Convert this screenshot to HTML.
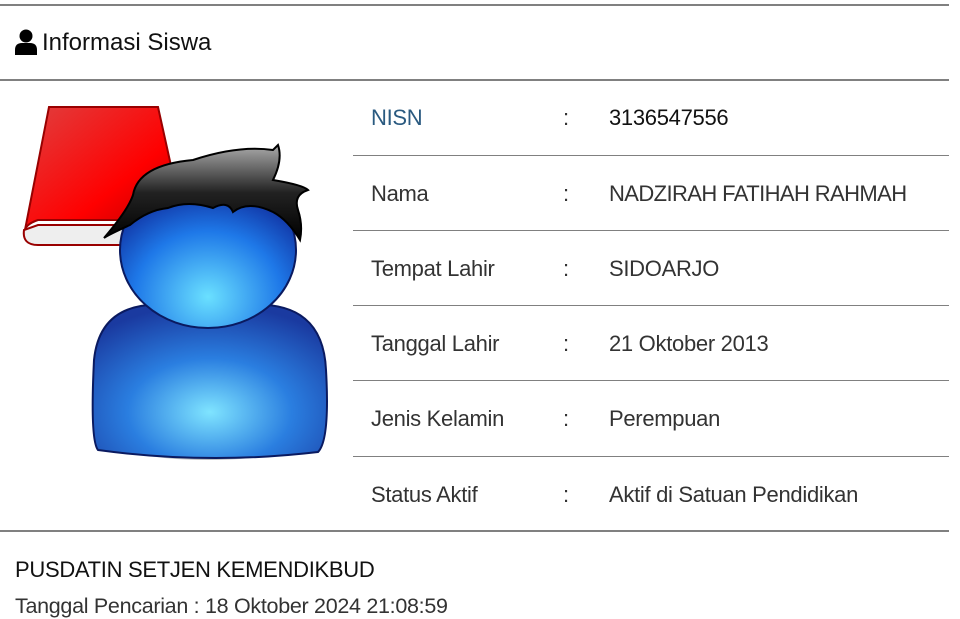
<!DOCTYPE html>
<html><head><meta charset="utf-8"><style>
body{margin:0;width:960px;height:613px;overflow:hidden;background:#fff;font-family:"Liberation Sans",sans-serif;color:#333;}
.hl{position:absolute;height:2px;background:#808080;}
.t{position:absolute;font-size:22px;white-space:nowrap;letter-spacing:-0.3px;}
</style></head><body>
<div class="hl" style="left:0;top:4px;width:949px"></div>
<div class="hl" style="left:0;top:79px;width:949px"></div>
<svg style="position:absolute;left:14px;top:29px" width="24" height="26" viewBox="0 0 24 26"><circle cx="12" cy="7" r="6.5" fill="#000"/><path d="M1 26 V21 Q1 14 8 14 H16 Q23 14 23 21 V26 Z" fill="#000"/></svg>
<div class="t" style="left:42px;top:29px;color:#111;font-size:24px;letter-spacing:0">Informasi Siswa</div>

<svg style="position:absolute;left:18px;top:100px" width="315" height="365" viewBox="0 0 315 365">
<defs>
<linearGradient id="r" x1="0" y1="0" x2="1" y2="1"><stop offset="0" stop-color="#e04040"/><stop offset=".6" stop-color="#ff0000"/><stop offset="1" stop-color="#b00000"/></linearGradient>
<radialGradient id="b" cx=".5" cy=".7" r=".7"><stop offset="0" stop-color="#7fe4ff"/><stop offset=".5" stop-color="#2a7ee0"/><stop offset="1" stop-color="#1a3aa0"/></radialGradient>
<radialGradient id="h" cx=".5" cy=".8" r=".7"><stop offset="0" stop-color="#6ae0ff"/><stop offset=".6" stop-color="#1e78e8"/><stop offset="1" stop-color="#1030a0"/></radialGradient>
<linearGradient id="k" x1="0" y1="0" x2="0" y2="1"><stop offset="0" stop-color="#aaa"/><stop offset=".5" stop-color="#222"/><stop offset="1" stop-color="#000"/></linearGradient>
</defs>
<path d="M31 7 H140 L165 120 H20 Q5 125 6 135 Z" fill="url(#r)" stroke="#900" stroke-width="2"/>
<path d="M6 130 Q4 145 20 145 H120 V125 H20 Z" fill="#eee" stroke="#900" stroke-width="2"/>
<ellipse cx="190" cy="335" rx="110" ry="25" fill="#000" opacity=".25"/>
<path d="M80 350 Q72 340 76 260 Q82 200 150 205 H230 Q305 200 308 270 Q312 340 300 352 Q190 365 80 350 Z" fill="url(#b)" stroke="#0a1a60" stroke-width="2"/>
<ellipse cx="190" cy="150" rx="88" ry="78" fill="url(#h)" stroke="#0a1a60" stroke-width="2"/>
<path d="M112 125 Q90 135 86 138 Q110 110 115 95 Q120 65 175 60 Q220 45 255 50 L260 45 Q265 60 255 80 Q285 85 290 90 Q275 95 280 110 Q285 125 282 140 Q270 120 255 112 Q230 100 215 112 Q210 100 195 108 Q170 100 150 108 Q130 110 112 125 Z" fill="url(#k)" stroke="#000" stroke-width="2"/>
</svg>

<div class="hl" style="left:353px;top:155px;width:596px;height:1px"></div>
<div class="hl" style="left:353px;top:230px;width:596px;height:1px"></div>
<div class="hl" style="left:353px;top:305px;width:596px;height:1px"></div>
<div class="hl" style="left:353px;top:380px;width:596px;height:1px"></div>
<div class="hl" style="left:353px;top:456px;width:596px;height:1px"></div>
<div class="hl" style="left:0;top:530px;width:949px"></div>

<div class="t" style="left:371px;top:105px;color:#2a5a80">NISN</div><div class="t" style="left:563px;top:105px">:</div><div class="t" style="left:609px;top:105px;color:#111">3136547556</div>
<div class="t" style="left:371px;top:181px">Nama</div><div class="t" style="left:563px;top:181px">:</div><div class="t" style="left:609px;top:181px;letter-spacing:-0.6px">NADZIRAH FATIHAH RAHMAH</div>
<div class="t" style="left:371px;top:256px">Tempat Lahir</div><div class="t" style="left:563px;top:256px">:</div><div class="t" style="left:609px;top:256px">SIDOARJO</div>
<div class="t" style="left:371px;top:331px">Tanggal Lahir</div><div class="t" style="left:563px;top:331px">:</div><div class="t" style="left:609px;top:331px">21 Oktober 2013</div>
<div class="t" style="left:371px;top:406px">Jenis Kelamin</div><div class="t" style="left:563px;top:406px">:</div><div class="t" style="left:609px;top:406px">Perempuan</div>
<div class="t" style="left:371px;top:482px">Status Aktif</div><div class="t" style="left:563px;top:482px">:</div><div class="t" style="left:609px;top:482px">Aktif di Satuan Pendidikan</div>

<div class="t" style="left:15px;top:557px;color:#111">PUSDATIN SETJEN KEMENDIKBUD</div>
<div class="t" style="left:15px;top:594px;font-size:21.5px">Tanggal Pencarian : 18 Oktober 2024 21:08:59</div>
</body></html>
